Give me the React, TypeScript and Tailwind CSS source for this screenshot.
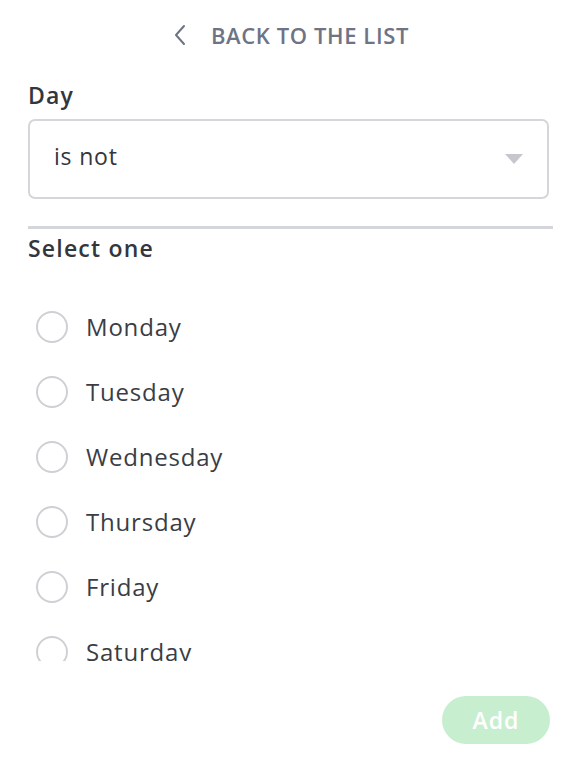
import React from "react";

const days = ["Monday", "Tuesday", "Wednesday", "Thursday", "Friday", "Saturday", "Sunday"];

function App() {
  return (
    <div
      className="w-[582px] h-[782px] bg-white flex flex-col text-[#33363d]"
      style={{ fontFamily: "'Open Sans', 'Noto Sans', sans-serif" }}
    >
      <div className="flex justify-center items-center gap-[24px] pt-[22px] h-[48px]">
        <svg width="14" height="22" viewBox="0 0 14 22" className="text-[#6e7385]">
          <path d="M11 2 L3 11 L11 20" fill="none" stroke="currentColor" strokeWidth="2" strokeLinecap="round" strokeLinejoin="round" />
        </svg>
        <span className="text-[22px] font-semibold text-[#6e7385] tracking-[0.6px]">BACK TO THE LIST</span>
      </div>

      <div className="px-[28px] pt-[33px]">
        <div className="text-[23px] font-semibold leading-[28px] tracking-[1.2px]">Day</div>
        <div className="mt-[10px] h-[80px] w-[521px] rounded-[7px] border-2 border-[#d5d6db] flex items-center justify-between pl-[24px] pr-[24px]">
          <span className="text-[23px] leading-[30px] -mt-[6px] tracking-[0.8px]">is not</span>
          <svg width="18" height="10" viewBox="0 0 18 10">
            <path d="M0 0 H18 L9 10 Z" fill="#c6c7cd" />
          </svg>
        </div>
        <div className="mt-[27px] h-[3px] w-[525px] bg-[#d5d6db]" />
        <div className="mt-[4px] text-[23px] font-semibold leading-[30px] tracking-[1.2px]">Select one</div>
      </div>

      <div className="mt-[31px] h-[367px] overflow-hidden px-[36px] flex flex-col">
        {days.map((d) => (
          <label key={d} className="flex items-center gap-[18px] h-[65px] shrink-0">
            <span className="w-[32px] h-[32px] rounded-full border-2 border-[#cfd0d4] shrink-0" />
            <span className="text-[24px] leading-[30px] text-[#3a3d44] tracking-[0.8px]">{d}</span>
          </label>
        ))}
      </div>

      <div className="flex justify-end pr-[32px] pt-[35px]">
        <button className="w-[108px] h-[48px] rounded-full bg-[#c8eed0] text-white text-[23px] font-semibold tracking-[1px]">
          Add
        </button>
      </div>
    </div>
  );
}

export default App;
